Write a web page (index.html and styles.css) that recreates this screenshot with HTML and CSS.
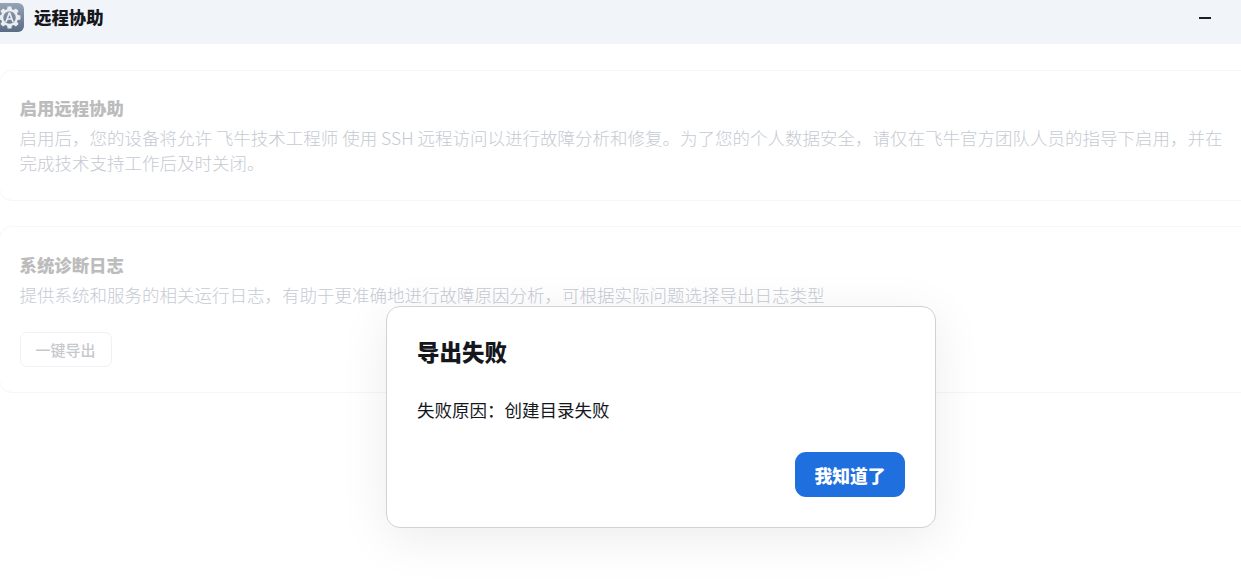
FILE: index.html
```html
<!DOCTYPE html>
<html lang="zh-CN">
<head>
  <meta charset="UTF-8" />
  <meta name="viewport" content="width=device-width, initial-scale=1.0"/>
  <title>远程协助</title>
  <link rel="stylesheet" href="styles.css">
</head>
<body>
  <header class="titlebar">
    <div class="app-icon">
      <svg viewBox="0 0 24 24" width="25" height="25">
        <path class="gear" fill-rule="evenodd" d="M10.2 1.5h3.6l.5 2.6 1.7.7 2.2-1.5 2.5 2.5-1.5 2.2.7 1.7 2.6.5v3.6l-2.6.5-.7 1.7 1.5 2.2-2.5 2.5-2.2-1.5-1.7.7-.5 2.6h-3.6l-.5-2.6-1.7-.7-2.2 1.5-2.5-2.5 1.5-2.2-.7-1.7-2.6-.5v-3.6l2.6-.5.7-1.7-1.5-2.2 2.5-2.5 2.2 1.5 1.7-.7zM12 6a6 6 0 1 0 0 12 6 6 0 0 0 0-12z"/>
        <path class="gear-a" d="M12 7.2 8.6 16.4M12 7.2 15.4 16.4M9.8 13.4h4.4"/>
      </svg>
    </div>
    <h1 class="app-title">远程协助</h1>
    <button class="minimize" aria-label="最小化"></button>
  </header>

  <main class="content">
    <section class="card card-remote">
      <h2 class="card-title">启用远程协助</h2>
      <p class="card-desc">启用后，您的设备将允许 飞牛技术工程师 使用 SSH 远程访问以进行故障分析和修复。为了您的个人数据安全，请仅在飞牛官方团队人员的指导下启用，并在完成技术支持工作后及时关闭。</p>
    </section>

    <section class="card card-logs">
      <h2 class="card-title">系统诊断日志</h2>
      <p class="card-desc">提供系统和服务的相关运行日志，有助于更准确地进行故障原因分析，可根据实际问题选择导出日志类型</p>
      <button class="btn-export">一键导出</button>
    </section>
  </main>

  <div class="dialog">
    <h3 class="dialog-title">导出失败</h3>
    <p class="dialog-text">失败原因：创建目录失败</p>
    <div class="dialog-actions">
      <button class="btn-ok">我知道了</button>
    </div>
  </div>
</body>
</html>
```

FILE: styles.css
```css
html, body {
  height: 100%;
}

body {
  margin: 0;
  position: relative;
  overflow: hidden;
  background: #fff;
  font-family: "Noto Sans CJK SC", "Liberation Sans", sans-serif;
  font-size: 17.5px;
}

.titlebar {
  height: 44px;
  display: flex;
  align-items: center;
  background: #f1f4f9;
  padding-right: 30px;
}

.app-icon {
  width: 29px;
  height: 29px;
  margin-left: -5px;
  margin-top: -10px;
  border-radius: 6px;
  background: linear-gradient(180deg, #97a4b6, #5b6b85);
  display: flex;
  align-items: center;
  justify-content: center;
  flex-shrink: 0;
}

.gear {
  fill: #e9edf2;
}

.gear-a {
  fill: none;
  stroke: #e9edf2;
  stroke-width: 1.6;
}

.app-title {
  margin: -11px 0 0 10px;
  font-size: 17.4px;
  line-height: 24px;
  font-weight: 900;
  color: #15171c;
  flex: 1;
}

.minimize {
  width: 12px;
  height: 2px;
  margin-top: -9px;
  padding: 0;
  border: none;
  background: #1c1f26;
}

.content {
  padding: 26px 0 0 0;
  margin-left: -1px;
  margin-right: -16px;
}

.card {
  border: 1px solid #f6f6f8;
  border-radius: 13px;
  padding: 25px 20px 0 19.5px;
  margin-bottom: 25px;
  box-sizing: border-box;
}

.card-remote {
  height: 131px;
  padding-top: 24px;
}

.card-logs {
  height: 167px;
}

.card-title {
  margin: 0;
  font-size: 17.4px;
  line-height: 25px;
  font-weight: 900;
  color: #bcbcbc;
}

.card-desc {
  margin: 5px 0 0;
  line-height: 25px;
  font-weight: 300;
  color: #c6cad3;
}

.btn-export {
  display: block;
  width: 92px;
  height: 35px;
  margin-top: 25px;
  padding: 0;
  border: 1px solid #f0f1f6;
  border-radius: 7px;
  background: #fff;
  font-family: inherit;
  font-size: 15px;
  font-weight: 500;
  color: #c6c8cc;
}

.dialog {
  position: absolute;
  left: 386px;
  top: 306px;
  width: 550px;
  height: 222px;
  box-sizing: border-box;
  padding: 27px 30px 0;
  background: #fff;
  border: 1px solid #d2d2d4;
  border-radius: 14px;
  box-shadow: 0 10px 50px rgba(0, 0, 0, 0.08);
}

.dialog-title {
  margin: 0;
  font-size: 22.5px;
  line-height: 34px;
  font-weight: 900;
  color: #15171c;
}

.dialog-text {
  margin: 29px 0 0;
  font-size: 17.5px;
  line-height: 26px;
  color: #15171c;
}

.dialog-actions {
  display: flex;
  justify-content: flex-end;
  margin-top: 29px;
}

.btn-ok {
  width: 110px;
  height: 45px;
  padding: 0;
  border: none;
  border-radius: 11px;
  background: #1f6fde;
  font-family: inherit;
  font-size: 17.8px;
  font-weight: 900;
  color: #fff;
}
```
